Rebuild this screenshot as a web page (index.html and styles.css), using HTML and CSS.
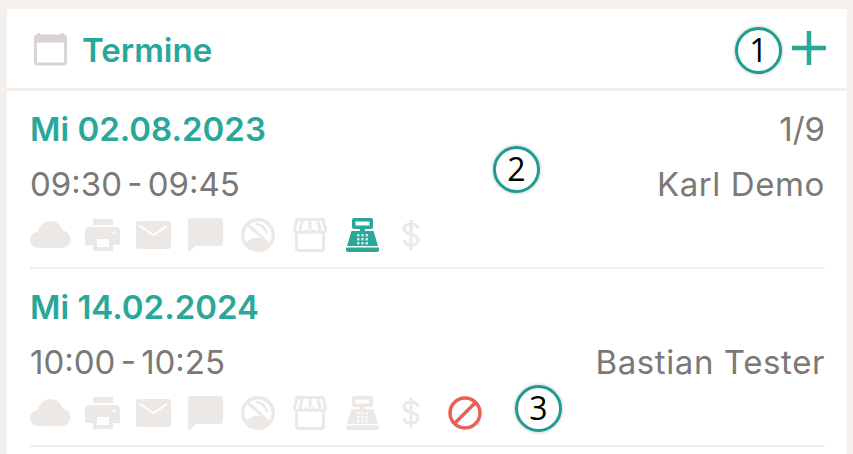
FILE: index.html
```html
<!DOCTYPE html>
<html lang="en">
<head>
  <meta charset="UTF-8">
  <meta name="viewport" content="width=device-width, initial-scale=1.0">
  <title>Termine</title>
  <link rel="stylesheet" href="styles.css">
</head>
<body>
  <!-- Icon set, used by both rows -->
  <svg class="icon-defs" aria-hidden="true">
    <symbol id="i-calendar" viewBox="0 0 36 36">
      <path d="M6 2v4M30 2v4" fill="none" stroke="currentColor" stroke-width="3"/>
      <path d="M3 5h30v7H3z" fill="currentColor"/>
      <rect x="2.5" y="5" width="31" height="29" rx="2" fill="none" stroke="currentColor" stroke-width="3"/>
    </symbol>
    <symbol id="i-cloud" viewBox="0 0 41 30">
      <path d="M9 28C4 28 0 24.500 0 20c0-4.200 3.300-7.500 7.500-8C9.500 5.500 14.500 1 20.500 1c5.800 0 10.500 3.800 12 9.500 4.500.5 8 4.300 8 8.800 0 4.800-3.700 8.700-8.500 8.700z" fill="currentColor"/>
    </symbol>
    <symbol id="i-print" viewBox="0 0 35 32">
      <path d="M8 0h20v6H8z" fill="currentColor"/>
      <path fill-rule="evenodd" d="M4 8h27c2.200 0 4 1.800 4 4v14h-7v6H8v-6H0V12c0-2.200 1.800-4 4-4zm8 12v8h12v-8zm17-8a1.500 1.500 0 1 0 0 3 1.500 1.500 0 0 0 0-3z" fill="currentColor"/>
    </symbol>
    <symbol id="i-mail" viewBox="0 0 35 28">
      <rect width="35" height="28" rx="3" fill="currentColor"/>
      <path d="M4 5l13.500 9L31 5" fill="none" stroke="#fff" stroke-width="2"/>
    </symbol>
    <symbol id="i-chat" viewBox="0 0 35 34">
      <path d="M3 0h29c1.700 0 3 1.300 3 3v22c0 1.700-1.300 3-3 3H8l-7 6H0V3c0-1.700 1.300-3 3-3z" fill="currentColor"/>
    </symbol>
    <symbol id="i-nosmoke" viewBox="0 0 34 34">
      <path d="M4 26c3-4 8-6.500 13-6.500S27 22 30 26c-3 4-8 6.500-13 6.500S7 30 4 26z" fill="currentColor"/>
      <circle cx="17" cy="17" r="15.300" fill="none" stroke="currentColor" stroke-width="3.400"/>
      <path d="M6 6l17 15" stroke="currentColor" stroke-width="3"/>
      <path d="M15 6c5 0 10 4 11 10" fill="none" stroke="currentColor" stroke-width="2.500"/>
    </symbol>
    <symbol id="i-shop" viewBox="0 0 34 34">
      <path d="M4 1.500h26l2.500 10c0 4-5.500 4-5.500 0 0 4-6.500 4-6.500 0 0 4-7 4-7 0 0 4-6.500 4-6.500 0 0 4-5.500 4-5.500 0z" fill="none" stroke="currentColor" stroke-width="3"/>
      <path d="M9.500 2l-2.500 9.500M17 2v9.500M24.500 2l2.500 9.500" stroke="currentColor" stroke-width="3"/>
      <path d="M3.500 16v14c0 1.500 1 2.500 2.500 2.500h22c1.500 0 2.500-1 2.500-2.500V16" fill="none" stroke="currentColor" stroke-width="3"/>
    </symbol>
    <symbol id="i-till" viewBox="0 0 35 34">
      <path fill-rule="evenodd" d="M9 0h17c1.100 0 2 .9 2 2v7c0 1.100-.9 2-2 2h-6v2h8.500L33 28H2l4.500-15H15v-2H9c-1.100 0-2-.9-2-2V2c0-1.100.9-2 2-2zm1.500 3.500v4h14v-4z" fill="currentColor"/>
      <path d="M1 29.500h33V32c0 1-1 2-2 2H3c-1 0-2-1-2-2z" fill="currentColor"/>
      <path d="M12 16h2.500v2.500H12zM16.250 16h2.500v2.500h-2.500zM20.500 16H23v2.500h-2.500zM12 20h2.500v2.500H12zM16.250 20h2.500v2.500h-2.500zM20.500 20H23v2.500h-2.500zM12 24h2.500v2.500H12zM16.250 24h2.500v2.500h-2.500zM20.500 24H23v2.500h-2.500z" fill="#fff" fill-opacity="0.75"/>
    </symbol>
    <symbol id="i-dollar" viewBox="0 0 18 32">
      <path d="M16 9.500C15.500 6.500 13 5 9 5S2 6.800 2 9.700c0 6.500 14 4 14 11.300 0 3.200-3 5-7 5s-6.700-1.800-7-5M9 1v30" fill="none" stroke="currentColor" stroke-width="3"/>
    </symbol>
    <symbol id="i-ban" viewBox="0 0 34 34">
      <circle cx="17" cy="17" r="15" fill="none" stroke="currentColor" stroke-width="3.500"/>
      <path d="M6.500 27.500l21-21" stroke="currentColor" stroke-width="3.500"/>
    </symbol>
  </svg>

  <section class="card">
    <header class="card-head">
      <svg class="head-cal"><use href="#i-calendar"/></svg>
      <h1>Termine</h1>
      <svg class="head-plus" viewBox="0 0 34 34"><path d="M17 0v34M0 17h34" stroke="currentColor" stroke-width="4.500"/></svg>
      <span class="marker marker-1">1</span>
    </header>

    <article class="termin">
      <div class="row row-date">
        <span class="date">Mi 02.08.2023</span>
        <span class="count">1/9</span>
      </div>
      <div class="row row-time">
        <span>09:30 - 09:45</span>
        <span class="person">Karl Demo</span>
      </div>
      <div class="icons">
        <svg class="ic w-cloud"><use href="#i-cloud"/></svg>
        <svg class="ic w-print"><use href="#i-print"/></svg>
        <svg class="ic w-mail"><use href="#i-mail"/></svg>
        <svg class="ic w-chat"><use href="#i-chat"/></svg>
        <svg class="ic w-round"><use href="#i-nosmoke"/></svg>
        <svg class="ic w-round"><use href="#i-shop"/></svg>
        <svg class="ic w-till active"><use href="#i-till"/></svg>
        <svg class="ic w-dollar"><use href="#i-dollar"/></svg>
      </div>
      <span class="marker marker-2">2</span>
    </article>

    <article class="termin">
      <div class="row row-date">
        <span class="date">Mi 14.02.2024</span>
      </div>
      <div class="row row-time">
        <span>10:00 - 10:25</span>
        <span class="person">Bastian Tester</span>
      </div>
      <div class="icons">
        <svg class="ic w-cloud"><use href="#i-cloud"/></svg>
        <svg class="ic w-print"><use href="#i-print"/></svg>
        <svg class="ic w-mail"><use href="#i-mail"/></svg>
        <svg class="ic w-chat"><use href="#i-chat"/></svg>
        <svg class="ic w-round"><use href="#i-nosmoke"/></svg>
        <svg class="ic w-round"><use href="#i-shop"/></svg>
        <svg class="ic w-till"><use href="#i-till"/></svg>
        <svg class="ic w-dollar"><use href="#i-dollar"/></svg>
        <svg class="ic w-round danger"><use href="#i-ban"/></svg>
      </div>
      <span class="marker marker-3">3</span>
    </article>
  </section>
</body>
</html>
```

FILE: styles.css
```css
/* Page */
html, body {
  height: 100%;
}

body {
  background-color: #f3f0ee;
  font-family: Inter, "Noto Sans", sans-serif;
  margin: 0;
  overflow: hidden;
  padding: 9px 6px 0 7px;
  box-sizing: border-box;
}

.icon-defs {
  display: none;
}

/* Card */
.card {
  background-color: #fff;
  height: 100%;
}

.card-head {
  align-items: center;
  border-bottom: 3px solid #f1eeec;
  box-sizing: border-box;
  display: flex;
  height: 82px;
  padding: 0 21px 0 26px;
  position: relative;
}

.card-head h1 {
  color: #2aa79b;
  flex: 1;
  font-size: 33px;
  font-weight: 600;
  margin: 3px 0 0 14px;
}

.head-cal {
  color: #d9d4d1;
  height: 37px;
  width: 35px;
}

.head-plus {
  color: #2aa79b;
  height: 34px;
  margin-top: -1px;
  width: 34px;
}

/* One appointment */
.termin {
  box-sizing: border-box;
  height: 178px;
  margin: 0 22px 0 23px;
  padding-top: 18px;
  position: relative;
  border-bottom: 2px solid #f1eeec;
}

.row {
  align-items: center;
  color: #7b7876;
  display: flex;
  font-size: 33px;
  justify-content: space-between;
}

.row-date {
  height: 40px;
}

.row-time {
  height: 40px;
  margin-top: 15px;
  word-spacing: -4px;
}

.person {
  letter-spacing: 0.6px;
  word-spacing: 0;
}

.date {
  color: #2aa79b;
  font-weight: 600;
}

/* Status icons */
.icons {
  align-items: center;
  color: #ece8e5;
  display: flex;
  height: 36px;
  margin-top: 13px;
}

.ic {
  flex: none;
  margin-right: 18px;
}

.w-cloud {
  height: 30px;
  margin-right: 14px;
  width: 41px;
}

.w-print {
  height: 32px;
  margin-right: 16px;
  width: 35px;
}

.w-mail {
  height: 28px;
  margin-right: 17px;
  width: 35px;
}

.w-chat {
  height: 34px;
  width: 35px;
}

.w-round {
  height: 34px;
  width: 34px;
}

.w-till {
  height: 34px;
  margin-right: 22px;
  width: 35px;
}

.w-dollar {
  height: 32px;
  margin-right: 28px;
  width: 18px;
}

.active {
  color: #2aa79b;
}

.danger {
  color: #ec5f55;
}

/* Numbered callouts sitting on top of the screen */
.marker {
  background-color: #fff;
  border: 3.5px solid #1f9c90;
  border-radius: 50%;
  box-shadow: 0 0 3px 1px #d8d8d8;
  box-sizing: border-box;
  color: #000;
  font-family: "Open Sans", sans-serif;
  font-size: 32px;
  height: 47px;
  line-height: 39px;
  position: absolute;
  text-align: center;
  width: 47px;
}

.marker-1 {
  right: 65px;
  top: 18px;
}

.marker-2 {
  left: 463px;
  top: 55px;
}

.marker-3 {
  left: 485px;
  top: 116px;
}
```
